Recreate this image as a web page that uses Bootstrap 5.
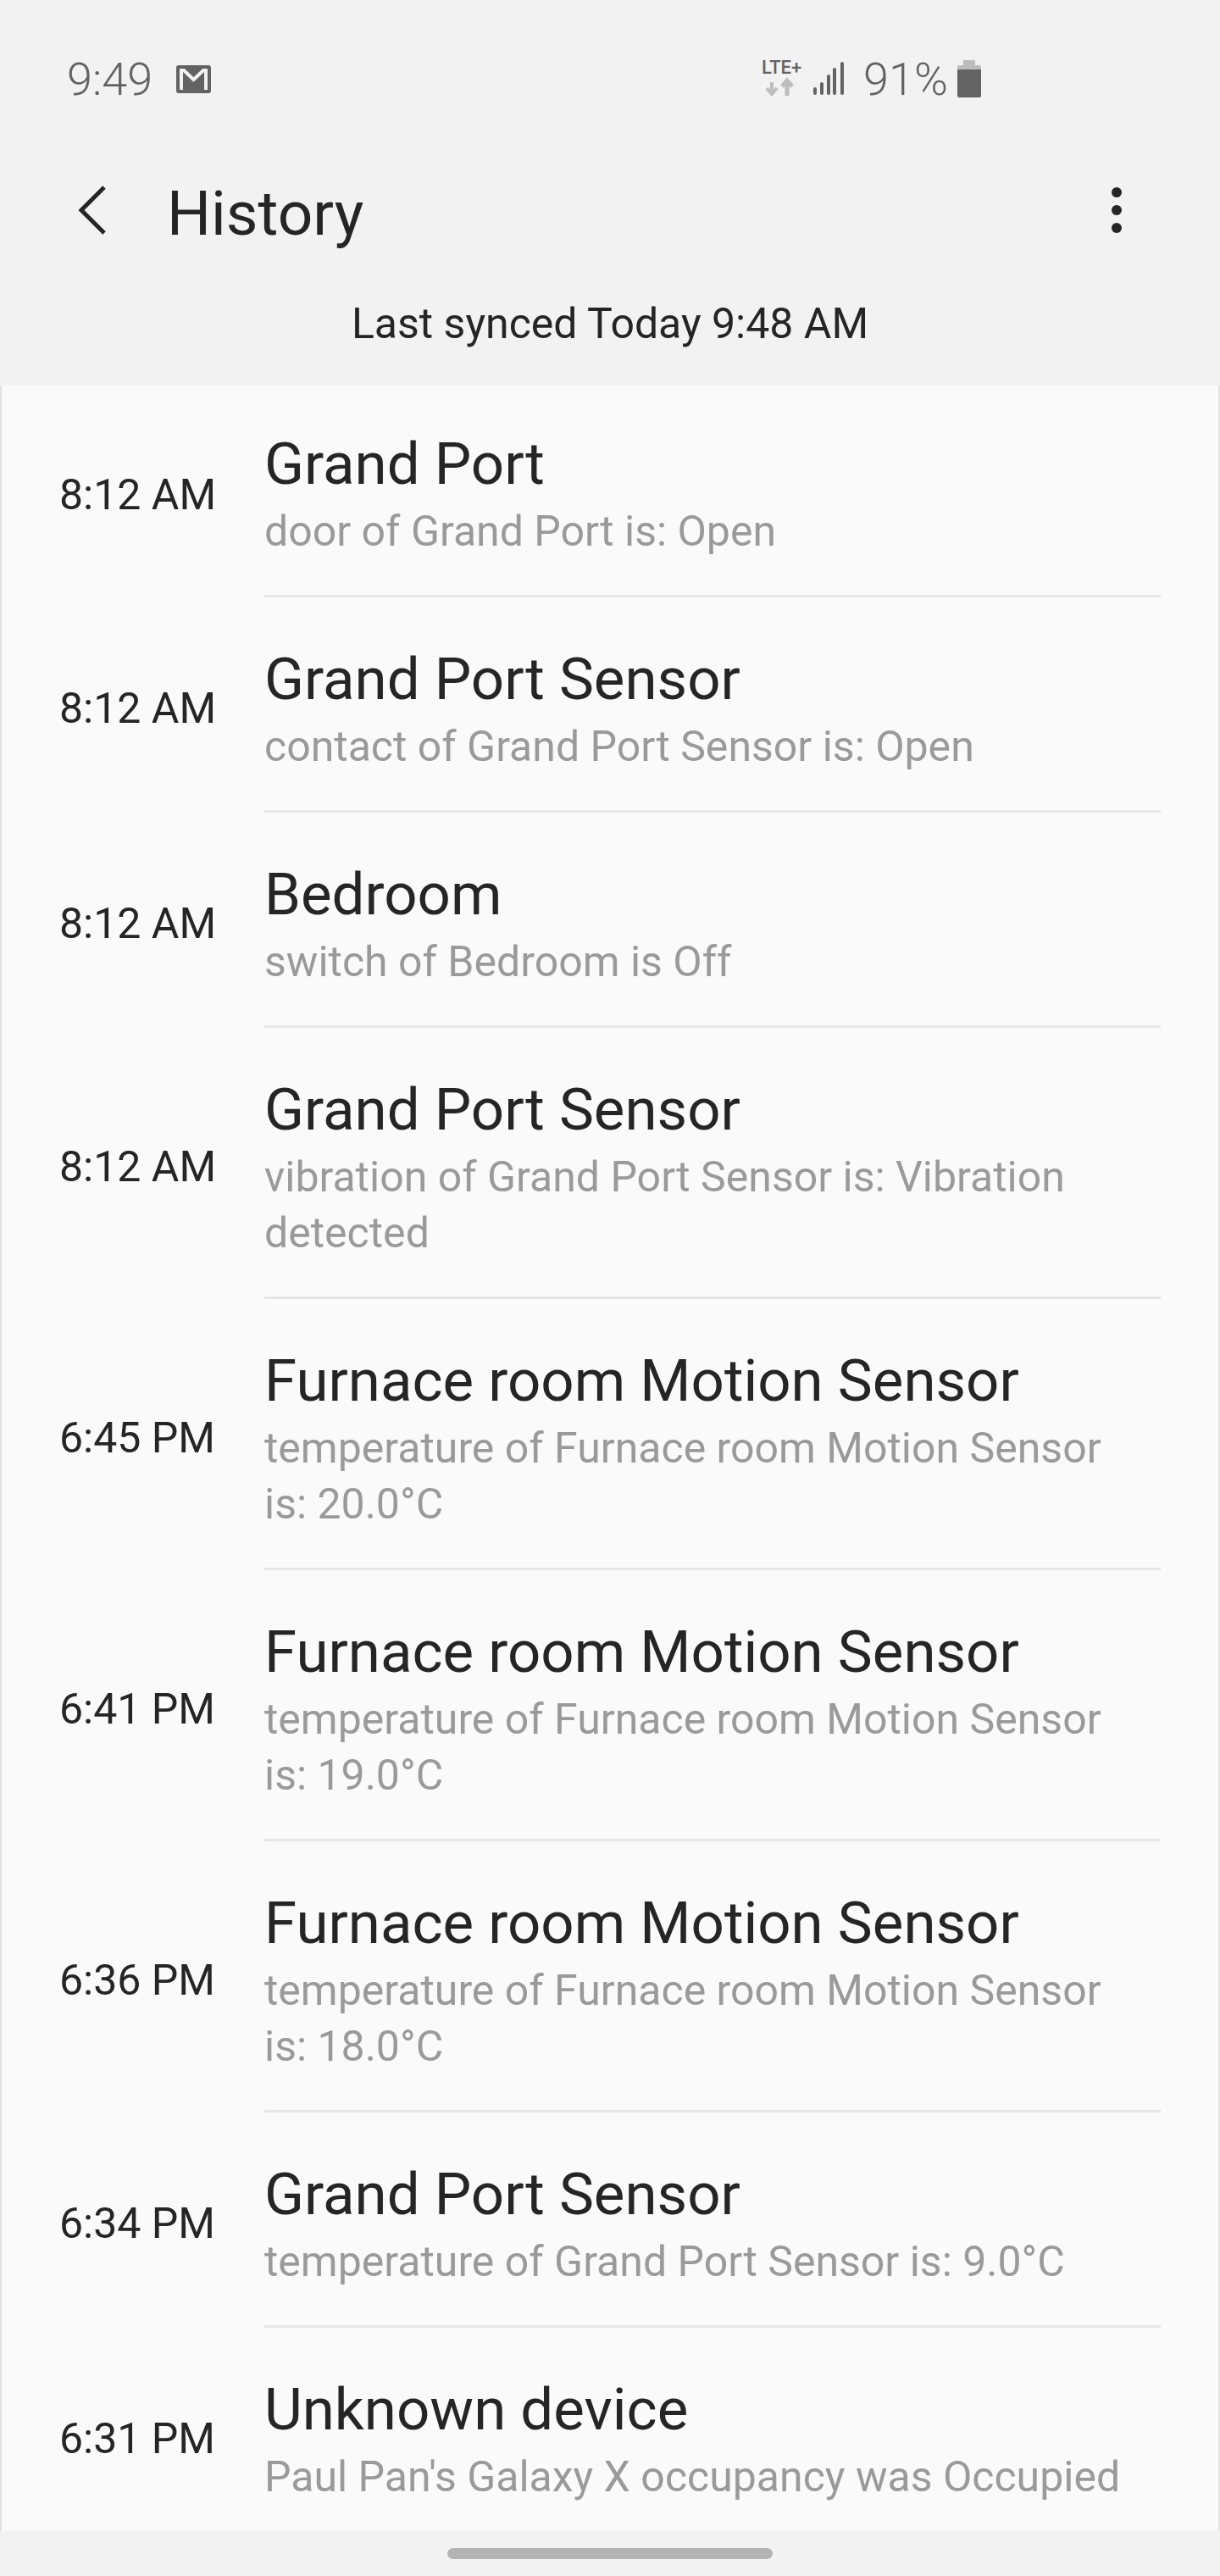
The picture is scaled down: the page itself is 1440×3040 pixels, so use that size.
<!DOCTYPE html>
<html lang="en">
<head>
    <meta charset="UTF-8">
    <meta name="viewport" content="width=device-width, initial-scale=1.0">
    <title>History</title>
    <link href="https://cdn.jsdelivr.net/npm/bootstrap@5.3.3/dist/css/bootstrap.min.css" rel="stylesheet">
    <style>
        body {
            background: #f2f2f2;
            font-family: "Roboto", "Liberation Sans", sans-serif;
            color: #252525;
            height: 3040px;
            overflow: hidden;
        }
        .status-row {
            height: 186px;
            padding-left: 79px;
            color: #636363;
            font-size: 54px;
            font-weight: 300;
        }
        .status-time { width: 129px; }
        .status-right { margin-left: 650px; }
        .status-percent { margin-left: 21px; margin-right: 11px; }
        .title-row {
            height: 112px;
            margin-top: 6px;
            padding-left: 92px;
            padding-right: 116px;
        }
        .page-title {
            font-size: 73px;
            font-weight: 400;
            margin: 0 0 0 71px;
            padding-top: 8px;
            line-height: 1;
        }
        .sync-line {
            font-size: 50px;
            line-height: 60px;
            height: 151px;
            padding-top: 48px;
            text-align: center;
        }
        .history-panel {
            background: #fafafa;
            border-left: 2px solid #e2e2e2;
            border-right: 2px solid #e2e2e2;
            height: 2532px;
            overflow: hidden;
        }
        .history-row { padding-left: 68px; padding-right: 68px; }
        .row-time {
            width: 242px;
            padding-top: 8px;
            font-size: 50px;
            flex-shrink: 0;
        }
        .row-body {
            flex-grow: 1;
            padding-top: 55px;
            padding-bottom: 42px;
            border-bottom: 3px solid #e6e6e6;
        }
        .history-row:first-child .row-body { padding-top: 51px; }
        .history-row:last-child .row-body { border-bottom-color: transparent; }
        .row-name {
            font-size: 69px;
            line-height: 84px;
            margin: 0 0 4px;
            font-weight: 400;
        }
        .row-text {
            font-size: 50px;
            line-height: 66px;
            padding-right: 40px;
            color: #9a9a9a;
            margin: 0;
        }
        .home-area { height: 53px; }
        .home-bar {
            width: 384px;
            height: 13px;
            margin-top: 20px;
            background: #b4b4b4;
            border-radius: 7px;
        }
    </style>
</head>
<body>
    <div class="status-row d-flex align-items-center">
        <span class="status-time">9:49</span>
        <svg width="41" height="33" viewBox="0 0 41 33">
            <rect width="41" height="33" rx="3" fill="#636363"/>
            <path d="M6 29V6h3l11.5 11L32 6h3v23" fill="none" stroke="#f2f2f2" stroke-width="4"/>
        </svg>
        <div class="status-right d-flex align-items-center">
            <svg width="56" height="54" viewBox="0 -6 56 54">
                <text x="0" y="15" font-family="Roboto" font-size="22" font-weight="500" fill="#636363">LTE+</text>
                <path d="M12 25v13M6 32l6 7 6-7" fill="none" stroke="#bdbdbd" stroke-width="4"/>
                <path d="M30 41V25M24 30l6-7 6 7" fill="none" stroke="#bdbdbd" stroke-width="5"/>
            </svg>
            <svg style="margin-left: 5px" width="38" height="40" viewBox="0 0 38 40">
                <g stroke="#636363" stroke-width="4" stroke-linecap="round">
                    <path d="M2 37v-5M10 37V26M18 37V17M25 37V9M34 37V2"/>
                </g>
            </svg>
            <span class="status-percent">91%</span>
            <svg width="28" height="44" viewBox="0 0 28 44">
                <path d="M7 0h14v6h5a2 2 0 0 1 2 2v3H0V8a2 2 0 0 1 2-2h5z" fill="#bcbcbc"/>
                <path d="M0 11h28v31a2 2 0 0 1-2 2H2a2 2 0 0 1-2-2z" fill="#636363"/>
            </svg>
        </div>
    </div>

    <div class="title-row d-flex align-items-center">
        <svg width="34" height="58" viewBox="0 0 34 58">
            <path d="M31 2 4 29l27 27" fill="none" stroke="#252525" stroke-width="5"/>
        </svg>
        <h1 class="page-title flex-grow-1">History</h1>
        <svg width="12" height="56" viewBox="0 0 12 56">
            <circle cx="6" cy="7" r="6" fill="#252525"/>
            <circle cx="6" cy="28" r="6" fill="#252525"/>
            <circle cx="6" cy="49" r="6" fill="#252525"/>
        </svg>
    </div>

    <div class="sync-line">Last synced Today 9:48 AM</div>

    <div class="history-panel" id="historyList"></div>

    <div class="home-area d-flex justify-content-center">
        <div class="home-bar"></div>
    </div>

    <script src="https://cdn.jsdelivr.net/npm/bootstrap@5.3.3/dist/js/bootstrap.bundle.min.js"></script>
    <script>
        const historyData = [
            { time: "8:12 AM", name: "Grand Port", text: "door of Grand Port is: Open" },
            { time: "8:12 AM", name: "Grand Port Sensor", text: "contact of Grand Port Sensor is: Open" },
            { time: "8:12 AM", name: "Bedroom", text: "switch of Bedroom is Off" },
            { time: "8:12 AM", name: "Grand Port Sensor", text: "vibration of Grand Port Sensor is: Vibration detected" },
            { time: "6:45 PM", name: "Furnace room Motion Sensor", text: "temperature of Furnace room Motion Sensor is: 20.0°C" },
            { time: "6:41 PM", name: "Furnace room Motion Sensor", text: "temperature of Furnace room Motion Sensor is: 19.0°C" },
            { time: "6:36 PM", name: "Furnace room Motion Sensor", text: "temperature of Furnace room Motion Sensor is: 18.0°C" },
            { time: "6:34 PM", name: "Grand Port Sensor", text: "temperature of Grand Port Sensor is: 9.0°C" },
            { time: "6:31 PM", name: "Unknown device", text: "Paul Pan's Galaxy X occupancy was Occupied" }
        ];

        const list = document.getElementById('historyList');
        historyData.forEach(item => {
            const row = document.createElement('div');
            row.className = 'history-row d-flex align-items-center';
            row.innerHTML = `
                <div class="row-time">${item.time}</div>
                <div class="row-body">
                    <p class="row-name">${item.name}</p>
                    <p class="row-text">${item.text}</p>
                </div>
            `;
            list.appendChild(row);
        });
    </script>
</body>
</html>
